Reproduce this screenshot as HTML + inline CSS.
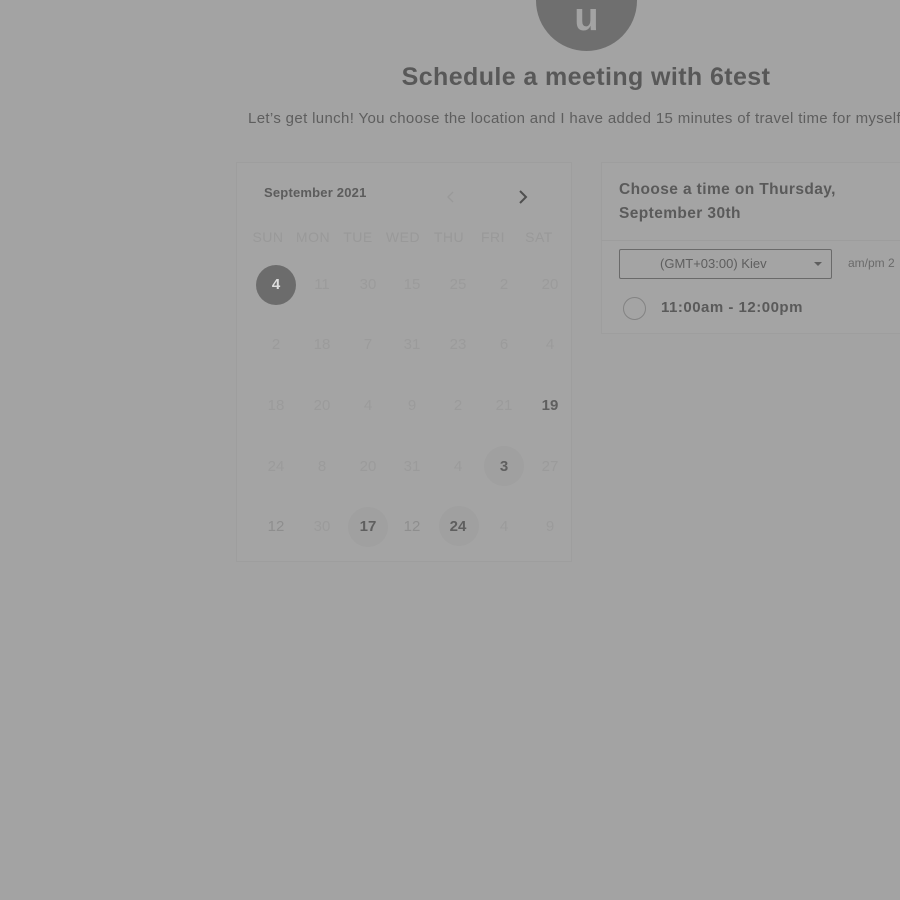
<!DOCTYPE html>
<html><head><style>
body{margin:0;width:900px;height:900px;background:#a3a3a3;font-family:"Liberation Sans",sans-serif;position:relative;overflow:hidden}
.a{position:absolute}
.av{left:536px;top:-50px;width:101px;height:101px;border-radius:50%;background:#6f6f6f}
.av span{position:absolute;left:0;right:0;top:45px;text-align:center;color:#a3a3a3;font-size:40px;font-weight:bold}
h1{position:absolute;left:0;width:1172px;top:63px;margin:0;text-align:center;font-size:25px;color:#585858;font-weight:900;letter-spacing:0.4px}
.sub{left:248px;top:110px;font-size:15px;color:#5e5e5e;white-space:nowrap;letter-spacing:0.35px}
.card{left:236px;top:162px;width:334px;height:398px;border:1px solid #9e9e9e;background:#a4a4a4}
.d{position:absolute;width:40px;text-align:center;font-size:15px;color:#9b9b9b;line-height:20px}
.b{color:#5f5f5f;font-weight:bold}
.bg{position:absolute;width:40px;height:40px;border-radius:50%;background:#a0a0a0}
.hd{position:absolute;font-size:14px;color:#999;width:46px;text-align:center;letter-spacing:0.5px}
.right{left:601px;top:162px;width:320px;height:170px;border:1px solid #9e9e9e;background:#a4a4a4}
</style></head><body>
<div class="a av"><span>u</span></div>
<h1>Schedule a meeting with 6test</h1>
<div class="a sub">Let’s get lunch! You choose the location and I have added 15 minutes of travel time for myself</div>
<div class="a card"></div>
<div class="a" style="left:264px;top:185px;font-size:13px;font-weight:bold;color:#5c5c5c;letter-spacing:0.2px">September 2021</div>
<svg class="a" style="left:446px;top:191px" width="10" height="12"><path d="M7 1l-5 5 5 5" stroke="#999" stroke-width="1.3" fill="none"/></svg>
<svg class="a" style="left:518px;top:190px" width="12" height="14"><path d="M2 1l6 6-6 6" stroke="#4f4f4f" stroke-width="2" fill="none"/></svg>
<div class="hd" style="left:245px;top:229px">SUN</div>
<div class="hd" style="left:287px;top:229px;width:52px">MON</div>
<div class="hd" style="left:335px;top:229px">TUE</div>
<div class="hd" style="left:380px;top:229px">WED</div>
<div class="hd" style="left:426px;top:229px">THU</div>
<div class="hd" style="left:470px;top:229px">FRI</div>
<div class="hd" style="left:516px;top:229px">SAT</div>
<div class="a" style="left:256px;top:265px;width:40px;height:40px;border-radius:50%;background:#6c6c6c"></div>
<div class="bg" style="left:484px;top:446px"></div>
<div class="bg" style="left:348px;top:507px"></div>
<div class="bg" style="left:439px;top:506px"></div>
<div id="g"></div>
<script>
var cols=[276,322,368,412,458,504,550],rows=[285,345,406,467,527];
var data=[["4","11","30","15","25","2","20"],["2","18","7","31","23","6","4"],["18","20","4","9","2","21","19"],["24","8","20","31","4","3","27"],["12","30","17","12","24","4","9"]];
var bold={"0,0":1,"2,6":1,"3,5":1,"4,2":1,"4,4":1};
var h="";
for(var r=0;r<5;r++)for(var c=0;c<7;c++){var k=r+","+c;var st="left:"+(cols[c]-20)+"px;top:"+(rows[r]-10)+"px;";var cl="d";
if(k=="0,0"){st+="color:#ddd;font-weight:bold";}else if(bold[k])cl+=" b";else if(r==4&&(c==0||c==3))st+="color:#8e8e8e";
h+='<div class="'+cl+'" style="'+st+'">'+data[r][c]+'</div>';}
document.getElementById("g").innerHTML=h;
</script>
<div class="a right"></div>
<div class="a" style="left:601px;top:240px;width:300px;border-top:1px solid #9d9d9d"></div>
<div class="a" style="left:619px;top:178px;font-size:15.5px;font-weight:bold;color:#5a5a5a;line-height:24px;letter-spacing:0.4px">Choose a time on Thursday,<br>September 30th</div>
<div class="a" style="left:619px;top:249px;width:211px;height:28px;border:1px solid #6a6a6a;border-radius:2px;font-size:13px;color:#5e5e5e;line-height:28px"><span style="margin-left:40px">(GMT+03:00) Kiev</span><span style="position:absolute;right:9px;top:12px;border-left:4px solid transparent;border-right:4px solid transparent;border-top:4px solid #5e5e5e"></span></div>
<div class="a" style="left:848px;top:256px;font-size:12px;color:#6a6a6a">am/pm 2</div>
<div class="a" style="left:623px;top:297px;width:21px;height:21px;border:1.5px solid #838383;border-radius:50%"></div>
<div class="a" style="left:661px;top:299px;font-size:15px;font-weight:bold;color:#5a5a5a;letter-spacing:0.5px">11:00am - 12:00pm</div>
</body></html>
